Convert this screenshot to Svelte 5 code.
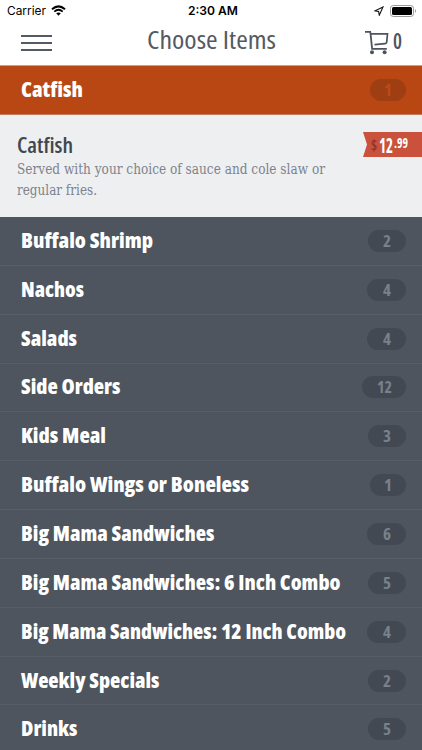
<script>
	let active = $state('Catfish');

	// width is the set width of the condensed label
	const categories = [
		{ name: 'Catfish', count: 1, width: 62, pill: 36 },
		{ name: 'Buffalo Shrimp', count: 2, width: 132, pill: 38 },
		{ name: 'Nachos', count: 4, width: 63, pill: 39 },
		{ name: 'Salads', count: 4, width: 56, pill: 39 },
		{ name: 'Side Orders', count: 12, width: 99.5, pill: 44 },
		{ name: 'Kids Meal', count: 3, width: 85, pill: 38 },
		{ name: 'Buffalo Wings or Boneless', count: 1, width: 228, pill: 36 },
		{ name: 'Big Mama Sandwiches', count: 6, width: 193.5, pill: 39 },
		{ name: 'Big Mama Sandwiches: 6 Inch Combo', count: 5, width: 319.5, pill: 38 },
		{ name: 'Big Mama Sandwiches: 12 Inch Combo', count: 4, width: 325, pill: 39 },
		{ name: 'Weekly Specials', count: 2, width: 138.5, pill: 38 },
		{ name: 'Drinks', count: 5, width: 56.5, pill: 38 }
	];
</script>

{#snippet label(text, width, height, baseline, kind)}
	<svg class="label {kind}" {width} {height}>
		<text x="0" y={baseline} textLength={width} lengthAdjust="spacingAndGlyphs">{text}</text>
	</svg>
{/snippet}

<div class="screen">
	<div class="status">
		<div class="carrier">
			{@render label('Carrier', 39, 20, 14, 'system')}
			<svg width="15" height="11" viewBox="0 0 15 11">
				<path d="M1 4.2Q7.5-1.4 14 4.2" fill="none" stroke="#000" stroke-width="2" />
				<path d="M3.3 6.6Q7.5 3 11.7 6.6" fill="none" stroke="#000" stroke-width="1.8" />
				<path d="M5.2 8.3Q7.5 6.5 9.8 8.3L7.5 10.7z" />
			</svg>
		</div>
		{@render label('2:30 AM', 50, 20, 14, 'system clock')}
		<div class="power">
			<svg width="10" height="10" viewBox="0 0 10 10">
				<path d="M9 1L1 4.8l3.6.6.7 3.8z" fill="none" stroke="#111" stroke-width="1.1" />
			</svg>
			<svg width="27" height="12" viewBox="0 0 27 12">
				<rect x=".5" y=".5" width="23" height="11" rx="2.8" fill="none" stroke="#999" />
				<rect x="2" y="2" width="20" height="8" rx="1.5" />
				<path d="M25 4q2 2 0 4z" fill="#999" />
			</svg>
		</div>
	</div>

	<header>
		<button class="menu" aria-label="Menu"><i></i><i></i><i></i></button>
		{@render label('Choose Items', 129, 36, 24, 'title')}
		<button class="cart" aria-label="Cart">
			<svg width="25" height="25" viewBox="0 0 25 25" fill="none" stroke="#4d545e">
				<path d="M0 .9h5.2l.4 2.3 1.5 14.7h14.7" stroke-width="1.8" />
				<path d="M5.3 2.9h17.2l-.8 8.2q-.2 1.4-1.5 1.5l-10.7 1" stroke-width="1.7" />
				<circle cx="7" cy="21.2" r="2" fill="#4d545e" stroke="none" />
				<circle cx="19.6" cy="21.2" r="2" fill="#4d545e" stroke="none" />
			</svg>
			{@render label('0', 9, 26, 19, 'quantity')}
		</button>
	</header>

	<main>
		{#each categories as category}
			<button
				class="category"
				class:active={active === category.name}
				onclick={() => (active = category.name)}
			>
				{@render label(category.name, category.width, 30, 22, 'name')}
				<span class="count" style="width: {category.pill}px">
					{@render label(category.count, category.count > 9 ? 15 : 8, 22, 16.7, 'number')}
				</span>
			</button>
			{#if category.name === 'Catfish' && active === 'Catfish'}
				<section class="item">
					<div class="description">
						{@render label('Catfish', 56, 26, 21, 'item-name')}
						{@render label('Served with your choice of sauce and cole slaw or', 308, 21, 16, 'copy')}
						{@render label('regular fries.', 80, 21, 16, 'copy')}
					</div>
					<div class="price">
						{@render label('$', 6, 25, 18.5, 'dollar')}
						{@render label('12', 14, 25, 21, 'whole')}
						{@render label('.99', 14, 25, 15.5, 'cents')}
					</div>
				</section>
			{/if}
		{/each}
	</main>
</div>

<style>
	:global(body) {
		margin: 0;
		background: #4e555e;
	}

	.screen {
		width: 422px;
		height: 750px;
		overflow: hidden;
		background: #4e555e;
		font-family: 'Open Sans', 'Noto Sans', sans-serif;
		font-stretch: 75%;
	}

	button {
		border: 0;
		padding: 0;
		background: none;
		font: inherit;
		cursor: pointer;
	}

	svg {
		display: block;
		flex: none;
	}

	.label {
		overflow: visible;
	}

	.status {
		display: grid;
		grid-template-columns: 1fr 50px 1fr;
		align-items: center;
		height: 21px;
		padding: 0 5px 0 7px;
		background: #fff;
	}

	.carrier,
	.power {
		display: flex;
		align-items: center;
		gap: 5px;
	}

	.power {
		justify-content: flex-end;
		gap: 6px;
	}

	.system {
		font: 12px Inter, 'Liberation Sans', sans-serif;
	}

	.clock {
		margin-left: 1px;
		font-weight: 600;
	}

	header {
		display: flex;
		align-items: center;
		justify-content: space-between;
		box-sizing: border-box;
		height: 45px;
		padding: 0 20px 0 21px;
		border-bottom: 1px solid #d59a82;
		background: #fff;
	}

	.menu {
		display: grid;
		gap: 5px;
		width: 31px;
	}

	.menu i {
		height: 2px;
		background: #535a65;
	}

	.title {
		margin-left: 5px;
		font-size: 26px;
		font-weight: 400;
		fill: #535a64;
	}

	.cart {
		display: flex;
		align-items: center;
		gap: 3px;
	}

	.quantity {
		font-size: 22px;
		font-weight: 600;
		fill: #4d545e;
	}

	.category {
		display: flex;
		align-items: center;
		justify-content: space-between;
		box-sizing: border-box;
		width: 100%;
		height: 48.85px;
		padding: 0 16px 0 20.5px;
		border-bottom: 1px solid #575e67;
		background: #4e555e;
	}

	.category.active {
		height: 49px;
		border-color: #c47b5c;
		background: #b84713;
	}

	.name {
		font-size: 21px;
		font-weight: 800;
		fill: #fff;
	}

	.count {
		display: flex;
		align-items: center;
		justify-content: center;
		height: 22px;
		border-radius: 11px;
		background: #434952;
	}

	.number {
		font-size: 16px;
		font-weight: 700;
		fill: #78818c;
	}

	.active .count {
		background: #a03e13;
	}

	.active .number {
		fill: #b94b1b;
	}

	.item {
		display: flex;
		justify-content: space-between;
		box-sizing: border-box;
		height: 102px;
		padding: 17px 0 0 16.5px;
		background: #eeeff1;
	}

	.item-name {
		font-size: 21px;
		font-weight: 600;
		fill: #41474f;
	}

	.copy {
		font: 15px 'DejaVu Serif Condensed', 'DejaVu Serif', serif;
		fill: #7c838e;
	}

	.price {
		display: flex;
		box-sizing: border-box;
		width: 59px;
		height: 25px;
		padding-left: 8px;
		background: #ca523c;
		clip-path: polygon(0 0, 100% 0, 100% 100%, 0 100%, 4px 50%);
		fill: #fff;
	}

	.dollar {
		margin-right: 2px;
		font-size: 16px;
		font-weight: 600;
		fill: #8f3023;
	}

	.whole {
		font-size: 21px;
		font-weight: 700;
	}

	.cents {
		margin-left: 1px;
		font-size: 14px;
		font-weight: 700;
	}
</style>
